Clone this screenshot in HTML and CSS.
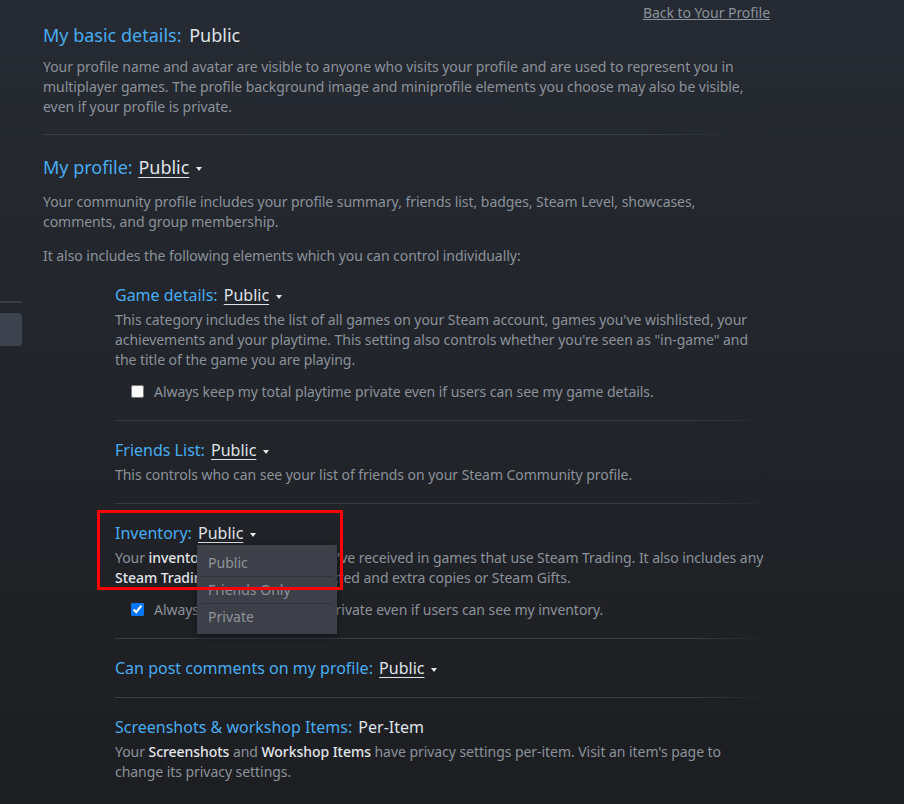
FILE: index.html
```html
<!DOCTYPE html>
<html lang="en">
<head>
<meta charset="utf-8">
<title>Privacy Settings</title>
<link rel="stylesheet" href="styles.css">
</head>
<body>
<div class="page">
  <aside class="sidebar">
    <div class="side-rule"></div>
    <div class="side-tab"></div>
  </aside>
  <main class="content">
    <div class="backrow"><a class="backlink" href="#">Back to Your Profile</a></div>

    <section class="block block--first">
      <h2 class="heading"><span class="label">My basic details:</span> <span class="value plain">Public</span></h2>
      <p class="desc">Your profile name and avatar are visible to anyone who visits your profile and are used to represent you in multiplayer games. The profile background image and miniprofile elements you choose may also be visible, even if your profile is private.</p>
    </section>

    <section class="block">
      <h2 class="heading heading--drop"><span class="label">My profile:</span> <span class="value">Public</span><span class="caret"></span></h2>
      <p class="desc desc--after-drop">Your community profile includes your profile summary, friends list, badges, Steam Level, showcases, comments, and group membership.</p>
      <p class="desc desc--gap">It also includes the following elements which you can control individually:</p>

      <div class="subs">
        <div class="sub sub--first">
          <h3 class="subhead"><span class="label">Game details:</span> <span class="value">Public</span><span class="caret"></span></h3>
          <p class="subdesc">This category includes the list of all games on your Steam account, games you've wishlisted, your achievements and your playtime. This setting also controls whether you're seen as "in-game" and the title of the game you are playing.</p>
          <label class="check"><input type="checkbox"><span>Always keep my total playtime private even if users can see my game details.</span></label>
        </div>

        <div class="sub">
          <h3 class="subhead"><span class="label">Friends List:</span> <span class="value">Public</span><span class="caret"></span></h3>
          <p class="subdesc">This controls who can see your list of friends on your Steam Community profile.</p>
        </div>

        <div class="sub sub--inventory">
          <h3 class="subhead"><span class="label">Inventory:</span> <span class="value value--open">Public<span class="menu"><span class="menu-item">Public</span><span class="menu-item">Friends Only</span><span class="menu-item">Private</span></span></span><span class="caret"></span></h3>
          <p class="subdesc">Your <b>inventory</b> includes items you've received in games that use Steam Trading. It also includes any <b>Steam Trading Cards</b> you've collected and extra copies or Steam Gifts.</p>
          <label class="check"><input type="checkbox" checked><span>Always keep my inventory private even if users can see my inventory.</span></label>
          <div class="highlight"></div>
        </div>

        <div class="sub sub--compact">
          <h3 class="subhead"><span class="label">Can post comments on my profile:</span> <span class="value">Public</span><span class="caret"></span></h3>
        </div>

        <div class="sub">
          <h3 class="subhead"><span class="label">Screenshots &amp; workshop Items:</span> <span class="value plain">Per-Item</span></h3>
          <p class="subdesc">Your <b>Screenshots</b> and <b>Workshop Items</b> have privacy settings per-item. Visit an item's page to change its privacy settings.</p>
        </div>
      </div>
    </section>
  </main>
</div>
</body>
</html>
```

FILE: styles.css
```css
html, body {
  margin: 0;
  padding: 0;
  height: 100%;
}

body {
  background: linear-gradient(180deg, #262a32 0%, #22252b 45%, #1d1e21 100%);
  font-family: "Noto Sans", "Open Sans", sans-serif;
  font-size: 14px;
  letter-spacing: -0.05px;
  color: #8b929b;
  overflow: hidden;
}

.page {
  display: flex;
  align-items: flex-start;
}

.sidebar {
  width: 22px;
  flex: 0 0 22px;
  padding-top: 301px;
}

.side-rule {
  height: 2px;
  background: #383c45;
}

.side-tab {
  margin-top: 10px;
  height: 33px;
  background: #3c424e;
  border-radius: 0 4px 4px 0;
}

.content {
  margin-left: 21px;
  width: 727px;
}

.backrow {
  display: flex;
  justify-content: flex-end;
  padding-top: 3px;
  line-height: 20px;
}

.backlink {
  color: #8b929b;
  text-decoration: underline;
}

.heading {
  margin: 0;
  font-size: 18px;
  font-weight: 400;
  line-height: 24px;
  letter-spacing: 0;
  white-space: nowrap;
}

.label {
  color: #48acf0;
}

.value {
  color: #dfe3e8;
  text-decoration: underline;
  text-underline-offset: 3px;
  text-decoration-thickness: 1px;
  margin-left: 1px;
}

.subhead .value {
  margin-left: 2px;
}

.heading .value.plain {
  margin-left: 3px;
}

.value.plain {
  text-decoration: none;
}

.caret {
  display: inline-block;
  width: 0;
  height: 0;
  border-left: 3.5px solid transparent;
  border-right: 3.5px solid transparent;
  border-top: 4px solid #e8eaed;
  margin-left: 7px;
  vertical-align: middle;
}

.desc {
  margin: 10px 0 0;
  line-height: 20px;
  width: 705px;
}

.desc--after-drop {
  margin-top: 13px;
}

.desc--gap {
  margin-top: 14px;
}

.block--first {
  padding-bottom: 18px;
  background: linear-gradient(90deg, #3b3f48 0%, #3b3f48 85%, rgba(59, 63, 72, 0) 100%) bottom left / 700px 1px no-repeat;
}

.block--first + .block {
  padding-top: 20px;
}

.subs {
  margin-left: 72px;
  width: 655px;
}

.sub {
  position: relative;
  padding: 17px 0 18px;
  background: linear-gradient(90deg, #373c46 0%, #373c46 88%, rgba(55, 60, 70, 0) 100%) top left / 100% 1px no-repeat;
}

.sub--first {
  padding-top: 16px;
  background: none;
}

.sub--compact {
  padding-bottom: 16px;
}

.subhead {
  margin: 0;
  font-size: 16px;
  font-weight: 400;
  line-height: 26px;
  letter-spacing: 0;
  white-space: nowrap;
}

.subdesc {
  margin: 2px 0 0;
  line-height: 20px;
}

.subdesc b {
  color: #e3e6ea;
  font-weight: 500;
}

.check {
  display: flex;
  align-items: center;
  margin: 11px 0 1px 16px;
  height: 20px;
  gap: 10px;
}

.check input {
  width: 13px;
  height: 13px;
  margin: 0;
}

.value--open {
  position: relative;
}

.menu {
  position: absolute;
  left: -1px;
  top: 23px;
  width: 140px;
  padding: 5px 0 4px;
  background: #3d4048;
  box-shadow: 0 2px 8px rgba(0, 0, 0, 0.45);
  display: flex;
  flex-direction: column;
  z-index: 5;
  text-decoration: none;
}

.menu-item {
  display: block;
  font-size: 14px;
  line-height: 26px;
  height: 26px;
  margin: 0 4px;
  padding: 0 7px;
  color: #8e939a;
  text-decoration: none;
  border-bottom: 1px solid #33363d;
}

.menu-item:last-child {
  border-bottom: none;
}

.highlight {
  position: absolute;
  left: -18px;
  top: 7px;
  width: 240px;
  height: 74px;
  border: 3px solid #ff0000;
  z-index: 10;
  pointer-events: none;
}
```
